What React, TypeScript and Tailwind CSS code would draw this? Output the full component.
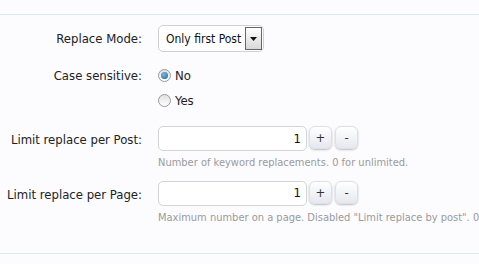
import React from "react";

const font = { fontFamily: '"DejaVu Sans Condensed", "DejaVu Sans", sans-serif' };

function StepBtn({ children }: { children: React.ReactNode }) {
  return (
    <button className="w-[23px] h-[23px] rounded-[6px] border border-[#dde0e8] bg-gradient-to-b from-white to-[#e6e8ef] shadow-[0_1px_2px_rgba(0,0,0,0.25)] text-[13px] text-[#333] flex items-center justify-center leading-none">
      {children}
    </button>
  );
}

function Radio({ checked }: { checked?: boolean }) {
  return (
    <span className="w-[13px] h-[13px] rounded-full border border-[#9a9a9a] bg-gradient-to-b from-[#e0e0e0] to-white flex items-center justify-center">
      {checked && <span className="w-[7px] h-[7px] rounded-full bg-[radial-gradient(circle_at_40%_35%,#7ab8e6,#1f5f96)]" />}
    </span>
  );
}

function NumRow({ label, hint }: { label: string; hint: string }) {
  return (
    <div className="flex">
      <div className="w-[142px] shrink-0 text-right text-[13px] text-[#222] pt-[4px]">{label}</div>
      <div className="ml-[16px] flex flex-col">
        <div className="flex items-start">
          <div className="w-[149px] h-[25px] rounded-[5px] border border-[#d4d4d4] bg-white text-[13px] text-[#111] flex items-center justify-end pr-[5px]">1</div>
          <div className="ml-[2px] flex gap-[3px]">
            <StepBtn>+</StepBtn>
            <StepBtn>-</StepBtn>
          </div>
        </div>
        <div className="mt-[4px] text-[11px] text-[#9a9a9a] whitespace-nowrap">{hint}</div>
      </div>
    </div>
  );
}

export default function App() {
  return (
    <div className="w-[479px] h-[264px] bg-[#fcfcff] overflow-hidden" style={font}>
      <div className="h-[14px]" />
      <div className="h-px bg-[#d9e9f1]" />
      <div className="h-[238px] pt-[10px] flex flex-col">
        <div className="flex items-center">
          <div className="w-[142px] text-right text-[13px] text-[#222]">Replace Mode:</div>
          <div className="ml-[16px] w-[106px] h-[27px] rounded-[5px] border border-[#d0d0d0] bg-white flex items-center">
            <span className="pl-[7px] text-[12px] text-[#111] flex-1 whitespace-nowrap">Only first Post</span>
            <span className="w-[17px] h-[23px] mr-[1px] border border-[#666] bg-gradient-to-b from-white to-[#d8d8d8] flex items-center justify-center">
              <svg width="7" height="4" viewBox="0 0 7 4"><path d="M0 0h7L3.5 4z" fill="#111" /></svg>
            </span>
          </div>
        </div>
        <div className="flex mt-[14px]">
          <div className="w-[142px] text-right text-[13px] text-[#222]">Case sensitive:</div>
          <div className="ml-[16px] flex flex-col gap-[5px]">
            <div className="flex items-center gap-[4px] text-[13px] text-[#222]"><Radio checked /> No</div>
            <div className="flex items-center gap-[4px] text-[13px] text-[#222]"><Radio /> Yes</div>
          </div>
        </div>
        <div className="mt-[16px]">
          <NumRow label="Limit replace per Post:" hint="Number of keyword replacements. 0 for unlimited." />
        </div>
        <div className="mt-[9px]">
          <NumRow label="Limit replace per Page:" hint={'Maximum number on a page. Disabled "Limit replace by post". 0 = unlimited.'} />
        </div>
      </div>
      <div className="h-px bg-[#d9ecec]" />
    </div>
  );
}
